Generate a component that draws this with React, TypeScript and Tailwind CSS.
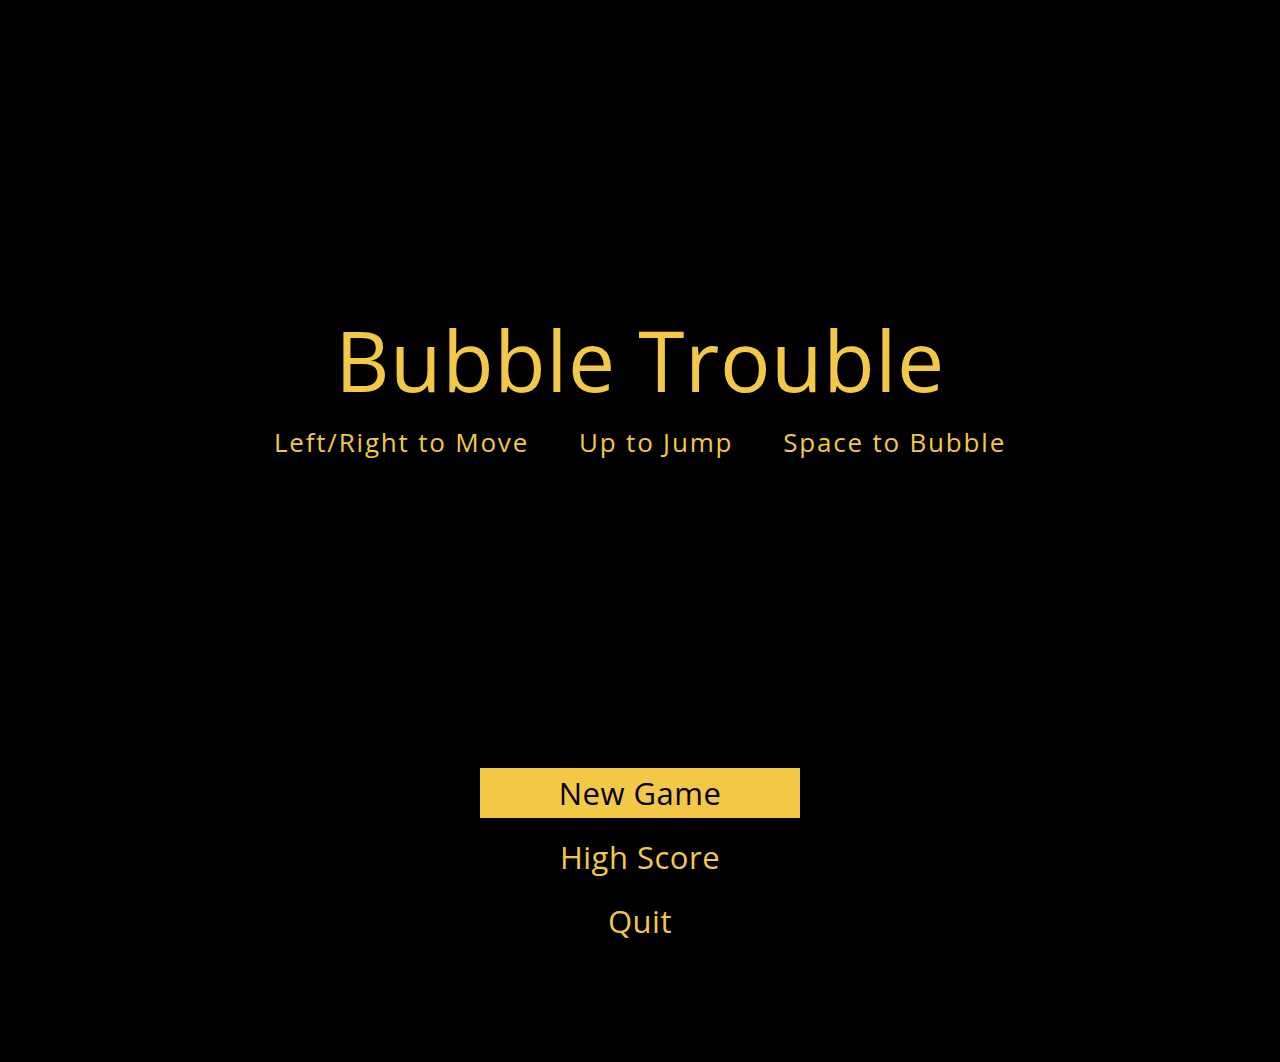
export default function App() {
	const font = { fontFamily: '"Open Sans", "Noto Sans", sans-serif' };
	return (
		<div
			className="w-full h-[1062px] bg-black flex flex-col items-center text-[#f3c846]"
			style={font}
		>
			<h1 className="mt-[318px] text-[84px] leading-none tracking-[0.6px]">
				Bubble Trouble
			</h1>
			<div className="mt-[27px] flex gap-[50px] text-[26px] font-medium leading-none tracking-[1.8px]">
				<span>Left/Right to Move</span>
				<span>Up to Jump</span>
				<span>Space to Bubble</span>
			</div>
			<div className="mt-[313px] flex flex-col items-center gap-[14px] text-[31px] tracking-[0.5px]">
				<div className="w-[320px] h-[50px] bg-[#f3c846] text-black flex items-center justify-center">
					New Game
				</div>
				<div className="h-[50px] flex items-center">High Score</div>
				<div className="h-[50px] flex items-center">Quit</div>
			</div>
		</div>
	);
}
